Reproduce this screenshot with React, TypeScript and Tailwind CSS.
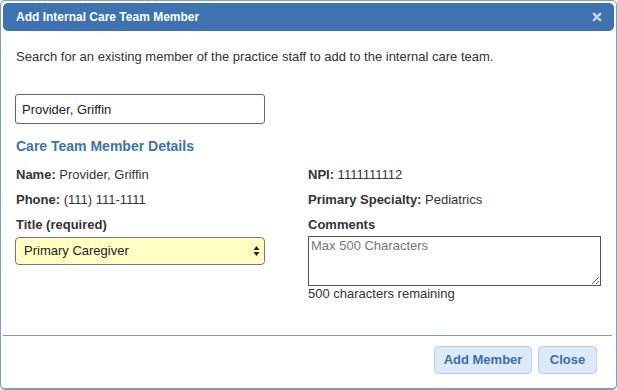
import React from 'react';

function CloseIcon() {
  return (
    <svg width="10" height="10" viewBox="0 0 10 10" aria-hidden="true">
      <path d="M1.8 1.8 L8.2 8.2 M8.2 1.8 L1.8 8.2" stroke="#c9dbef" strokeWidth="2.4" strokeLinecap="round" />
    </svg>
  );
}

function SelectArrows() {
  return (
    <svg width="7" height="12" viewBox="0 0 7 12" aria-hidden="true">
      <path d="M3.5 1 L6.5 5 L0.5 5 Z" fill="#222" />
      <path d="M3.5 11 L6.5 7 L0.5 7 Z" fill="#222" />
    </svg>
  );
}

export default function App() {
  return (
    <div className="w-[617px] h-[390px] bg-white font-['Liberation_Sans',Arial,sans-serif] text-[13px] text-[#333]">
      <div className="flex flex-col h-full border border-[#7f9ec0] border-b-2 rounded-[5px] p-[2px]">
        {/* Title bar */}
        <div className="flex items-center justify-between h-[28px] shrink-0 rounded-[5px] bg-[#3e72b0] pl-[13px] pr-[12px]">
          <span className="text-white font-bold text-[12px]">Add Internal Care Team Member</span>
          <CloseIcon />
        </div>

        {/* Body */}
        <div className="flex-1 px-[13px]">
          <p className="mt-[18px] leading-[16px]">
            Search for an existing member of the practice staff to add to the internal care team.
          </p>

          <input
            type="text"
            defaultValue="Provider, Griffin"
            className="block mt-[29px] -ml-px w-[250px] h-[30px] border border-[#666] rounded-[3px] px-[6px] text-[13px] text-[#222] outline-none"
          />

          <h3 className="mt-[13px] text-[14px] leading-[18px] font-bold text-[#3d72b2]">Care Team Member Details</h3>

          <div className="grid grid-cols-[292px_1fr] mt-[12px]">
            {/* Left column */}
            <div className="flex flex-col">
              <div className="leading-[16px]">
                <span className="font-bold">Name:</span> Provider, Griffin
              </div>
              <div className="leading-[16px] mt-[9px]">
                <span className="font-bold">Phone:</span> (111) 111-1111
              </div>
              <div className="leading-[16px] mt-[9px] font-bold">Title (required)</div>
              <div className="relative mt-[4px] -ml-px w-[250px]">
                <select className="appearance-none w-full h-[28px] border border-[#777] rounded-[4px] bg-[#ffffc4] pl-[8px] text-[13px] text-[#222] outline-none">
                  <option>Primary Caregiver</option>
                </select>
                <span className="absolute right-[5px] top-[8px] pointer-events-none">
                  <SelectArrows />
                </span>
              </div>
            </div>

            {/* Right column */}
            <div className="flex flex-col">
              <div className="leading-[16px]">
                <span className="font-bold">NPI:</span> 1111111112
              </div>
              <div className="leading-[16px] mt-[9px]">
                <span className="font-bold">Primary Specialty:</span> Pediatrics
              </div>
              <div className="leading-[16px] mt-[9px] font-bold">Comments</div>
              <textarea
                placeholder="Max 500 Characters"
                className="block mt-[3px] w-[293px] h-[50px] border border-[#555] px-[2px] py-[1px] text-[13px] leading-[16px] text-[#222] placeholder:text-[#777] outline-none"
              />
              <div className="leading-[16px]">500 characters remaining</div>
            </div>
          </div>
        </div>

        {/* Footer */}
        <div className="flex justify-end gap-[6px] border-t border-[#7f9ec0] pt-[10px] pb-[12px] pr-[15px] mr-[2px]">
          <button className="h-[28px] w-[98px] rounded-[4px] border border-[#b8d2ee] bg-[#dbe9f9] text-[#3d6ea8] font-bold text-[13px]">
            Add Member
          </button>
          <button className="h-[28px] w-[59px] rounded-[4px] border border-[#b8d2ee] bg-[#dbe9f9] text-[#3d6ea8] font-bold text-[13px]">
            Close
          </button>
        </div>
      </div>
    </div>
  );
}
